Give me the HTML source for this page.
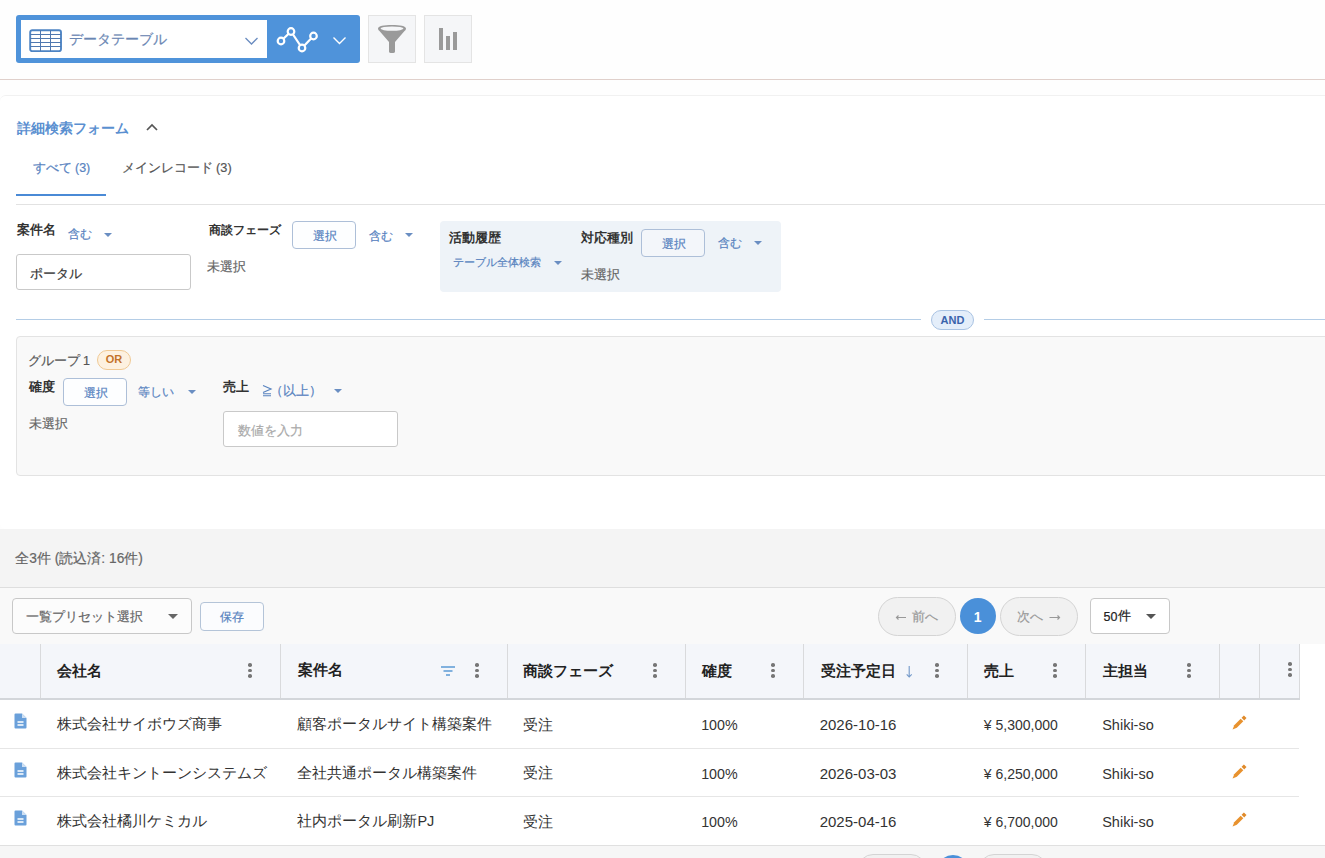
<!DOCTYPE html>
<html lang="ja">
<head>
<meta charset="utf-8">
<style>
*{box-sizing:border-box;margin:0;padding:0}
html,body{width:1325px;height:858px;overflow:hidden;background:#fefefe}
body{font-family:"Liberation Sans",sans-serif;position:relative;color:#333}
.a{position:absolute;white-space:nowrap;line-height:1}
.n{-webkit-text-stroke:0.2px currentColor}
.tri{position:absolute;width:0;height:0;border-left:4px solid transparent;border-right:4px solid transparent;border-top:4px solid #6a8ec2}
.btn{position:absolute;border:1px solid #adbfd8;border-radius:4px;background:#fdfeff}
.kb{position:absolute;width:4px;height:15px}
.kb i{position:absolute;left:0.2px;width:3.6px;height:3.6px;border-radius:50%;background:#767676}
.vd{position:absolute;top:644px;width:1px;height:54px;background:#d9dadc}
.rs{position:absolute;left:0;width:1299px;height:1px;background:#e6e6e6}
</style>
</head>
<body>
<div class="a" style="left:0;top:79px;width:1325px;height:1px;background:#e0d0cb"></div>
<div class="a" style="left:16px;top:15px;width:344px;height:48px;background:#4f93da;border-radius:3px"></div>
<div class="a" style="left:21px;top:20px;width:246px;height:38px;background:#fff"></div>
<svg class="a" style="left:29px;top:29px" width="33" height="23" viewBox="0 0 33 23">
<rect x="1.2" y="1.2" width="30.8" height="21" rx="2" fill="none" stroke="#4d84c4" stroke-width="1.9"/>
<path d="M1 5.5h31M1 9.5h31M1 13.5h31M1 17.5h31M11.5 1v21M21.5 1v21" stroke="#4f78b0" stroke-width="1" fill="none"/>
</svg>
<div class="a n" style="left:68.5px;top:32.5px;font-size:13.5px;color:#6a86b3;">データテーブル</div>
<svg class="a" style="left:244px;top:36px" width="15" height="10" viewBox="0 0 15 10"><path d="M1.5 2l6 6 6-6" stroke="#6a8cc0" stroke-width="1.3" fill="none"/></svg>
<svg class="a" style="left:276px;top:26px" width="42" height="28" viewBox="0 0 42 28">
<path d="M5 15L15 5.5L26 22L37.5 10" stroke="#fff" stroke-width="2.2" fill="none"/>
<circle cx="5" cy="15" r="3.3" fill="#4f93da" stroke="#fff" stroke-width="2.2"/>
<circle cx="15" cy="5.5" r="3.3" fill="#4f93da" stroke="#fff" stroke-width="2.2"/>
<circle cx="26" cy="22" r="3.3" fill="#4f93da" stroke="#fff" stroke-width="2.2"/>
<circle cx="37.5" cy="10" r="3.3" fill="#4f93da" stroke="#fff" stroke-width="2.2"/>
</svg>
<svg class="a" style="left:332px;top:35px" width="15" height="11" viewBox="0 0 15 11"><path d="M1.5 2.5l6 6 6-6" stroke="#fff" stroke-width="1.4" fill="none"/></svg>
<div class="a" style="left:368px;top:15px;width:48px;height:48px;background:#f5f6f8;border:1px solid #e4e4e4"></div>
<svg class="a" style="left:376px;top:23px" width="32" height="32" viewBox="0 0 32 32">
<path d="M2 5.5C2 3 8 2 16 2S30 3 30 5.5C30 6.5 29.5 7.2 28.5 8L19 19V28.5C19 29.5 18 30 16 30S13 29.5 13 28.5V19L3.5 8C2.5 7.2 2 6.5 2 5.5Z" fill="#9a9a9a"/>
<ellipse cx="16" cy="5.6" rx="11.5" ry="2.2" fill="#f5f6f8"/>
</svg>
<div class="a" style="left:424px;top:15px;width:48px;height:48px;background:#f5f6f8;border:1px solid #e4e4e4"></div>
<div class="a" style="left:439px;top:28px;width:4px;height:22px;background:#9a9a9a"></div>
<div class="a" style="left:446px;top:36px;width:4px;height:14px;background:#9a9a9a"></div>
<div class="a" style="left:453px;top:32px;width:4px;height:18px;background:#9a9a9a"></div>
<div class="a" style="left:0;top:95px;width:1340px;height:434px;background:#fff;border-top:1px solid #f1f1f1;border-radius:6px 0 0 6px"></div>
<div class="a" style="left:16.5px;top:122.0px;font-size:13.5px;font-weight:bold;color:#5a8fd0;">詳細検索フォーム</div>
<svg class="a" style="left:145px;top:122px" width="14" height="10" viewBox="0 0 14 10"><path d="M2 8l5-5 5 5" stroke="#555" stroke-width="1.7" fill="none"/></svg>
<div class="a n" style="left:32.5px;top:162.0px;font-size:12.5px;color:#5883bf;">すべて (3)</div>
<div class="a n" style="left:121.5px;top:161.5px;font-size:12.75px;color:#555;">メインレコード (3)</div>
<div class="a" style="left:16px;top:193.5px;width:90px;height:2.5px;background:#4a8ad6"></div>
<div class="a" style="left:16px;top:204px;width:1309px;height:1px;background:#e2e2e2"></div>
<div class="a" style="left:16.7px;top:224.2px;font-size:12.5px;font-weight:bold;color:#333;">案件名</div>
<div class="a n" style="left:67.5px;top:228.5px;font-size:11.5px;color:#5883bf;">含む</div>
<div class="tri" style="left:104px;top:233px"></div>
<div class="a" style="left:16px;top:254px;width:175px;height:36px;border:1px solid #c9c9c9;border-radius:3px;background:#fff"></div>
<div class="a n" style="left:29.5px;top:267.5px;font-size:12.5px;color:#333;">ポータル</div>
<div class="a" style="left:209.0px;top:223.5px;font-size:12px;font-weight:bold;color:#333;">商談フェーズ</div>
<div class="btn" style="left:292px;top:221px;width:64px;height:28px"></div>
<div class="a n" style="left:312.5px;top:230.5px;font-size:11.5px;color:#5883bf;">選択</div>
<div class="a n" style="left:369.1px;top:230.5px;font-size:11.5px;color:#5883bf;">含む</div>
<div class="tri" style="left:405px;top:233px"></div>
<div class="a n" style="left:207.3px;top:261.0px;font-size:12.5px;color:#666;">未選択</div>
<div class="a" style="left:440px;top:221px;width:341px;height:71px;background:#eef3f8;border-radius:4px"></div>
<div class="a" style="left:448.5px;top:232.0px;font-size:12.5px;font-weight:bold;color:#333;">活動履歴</div>
<div class="a n" style="left:452.5px;top:256.5px;font-size:10.75px;color:#5883bf;">テーブル全体検索</div>
<div class="tri" style="left:554px;top:261px"></div>
<div class="a" style="left:581.2px;top:232.0px;font-size:12.5px;font-weight:bold;color:#333;">対応種別</div>
<div class="btn" style="left:641px;top:229px;width:64px;height:28px;background:#f3f6fa"></div>
<div class="a n" style="left:661.5px;top:238.5px;font-size:11.5px;color:#5883bf;">選択</div>
<div class="a n" style="left:718.0px;top:238.2px;font-size:11.5px;color:#5883bf;">含む</div>
<div class="tri" style="left:754px;top:241px"></div>
<div class="a n" style="left:581.3px;top:269.0px;font-size:12.5px;color:#666;">未選択</div>
<div class="a" style="left:16px;top:319px;width:905px;height:1px;background:#b4cde6"></div>
<div class="a" style="left:984px;top:319px;width:341px;height:1px;background:#b4cde6"></div>
<div class="a" style="left:931px;top:310px;width:43px;height:20px;background:#e4eefa;border:1px solid #a9c3e3;border-radius:10px"></div>
<div class="a" style="left:940.6px;top:315.0px;font-size:11px;font-weight:bold;color:#3a64ac;">AND</div>
<div class="a" style="left:16px;top:336px;width:1330px;height:140px;background:#f9f9f9;border:1px solid #e3e3e3;border-radius:4px"></div>
<div class="a n" style="left:27.5px;top:354.5px;font-size:12.5px;color:#555;">グループ 1</div>
<div class="a" style="left:97px;top:350px;width:34px;height:20px;background:#fdf1e0;border:1px solid #f0c994;border-radius:10px"></div>
<div class="a" style="left:105.7px;top:354.3px;font-size:11px;font-weight:bold;color:#c4732a;">OR</div>
<div class="a" style="left:28.8px;top:381.0px;font-size:12.5px;font-weight:bold;color:#333;">確度</div>
<div class="btn" style="left:63px;top:378px;width:64px;height:28px"></div>
<div class="a n" style="left:83.5px;top:387.5px;font-size:11.5px;color:#5883bf;">選択</div>
<div class="a n" style="left:138.2px;top:387.0px;font-size:11.5px;color:#5883bf;">等しい</div>
<div class="tri" style="left:188px;top:390px"></div>
<div class="a n" style="left:29.1px;top:418.0px;font-size:12.5px;color:#666;">未選択</div>
<div class="a" style="left:223.0px;top:381.0px;font-size:12.5px;font-weight:bold;color:#333;">売上</div>
<svg class="a" style="left:261px;top:384px" width="12" height="13" viewBox="0 0 12 13"><path d="M2 1.5l8 3.5-8 3.5" stroke="#5883bf" stroke-width="1.2" fill="none"/><path d="M2 9.8h8M2 11.8h8" stroke="#5883bf" stroke-width="1.1"/></svg>
<div class="a n" style="left:269.5px;top:385.0px;font-size:12.5px;color:#5883bf;">（以上）</div>
<div class="tri" style="left:334px;top:389px"></div>
<div class="a" style="left:223px;top:411px;width:175px;height:36px;border:1px solid #c9c9c9;border-radius:3px;background:#fff"></div>
<div class="a n" style="left:237.8px;top:425.0px;font-size:12.75px;color:#aaa;">数値を入力</div>
<div class="a" style="left:0;top:529px;width:1325px;height:59px;background:#f4f4f4"></div>
<div class="a" style="left:0;top:587px;width:1325px;height:1px;background:#dedede"></div>
<div class="a" style="left:0;top:588px;width:1325px;height:56px;background:#f9f9f9"></div>
<div class="a n" style="left:15.3px;top:552.0px;font-size:13.75px;color:#666;">全3件 (読込済: 16件)</div>
<div class="a" style="left:12px;top:598px;width:180px;height:36px;background:#fcfcfc;border:1px solid #c8c8c8;border-radius:4px"></div>
<div class="a n" style="left:26.0px;top:611.0px;font-size:12.75px;color:#666;">一覧プリセット選択</div>
<div class="tri" style="left:168px;top:614px;border-top-color:#666;border-left-width:5px;border-right-width:5px;border-top-width:5px"></div>
<div class="btn" style="left:200px;top:602px;width:64px;height:29px;border-color:#b4c4d8;background:#fbfcfe"></div>
<div class="a n" style="left:220.3px;top:611.5px;font-size:11.5px;color:#5883bf;">保存</div>
<div class="a" style="left:878px;top:597px;width:78px;height:39px;background:#f1f1f1;border:1px solid #d4d4d4;border-radius:20px"></div>
<div class="a n" style="left:912.2px;top:609.5px;font-size:13px;color:#999;">前へ</div>
<svg class="a" style="left:895px;top:613px" width="12" height="9" viewBox="0 0 12 9"><path d="M1.5 4.5h9.5M3.5 2.5L1.5 4.5 3.5 6.5" stroke="#999" stroke-width="1.2" fill="none"/></svg>
<div class="a" style="left:960px;top:598px;width:36px;height:36px;background:#4a90d9;border-radius:50%"></div>
<div class="a" style="left:973.8px;top:610.0px;font-size:14px;font-weight:bold;color:#fff;">1</div>
<div class="a" style="left:1000px;top:597px;width:78px;height:39px;background:#f1f1f1;border:1px solid #d4d4d4;border-radius:20px"></div>
<div class="a n" style="left:1017.2px;top:609.6px;font-size:13px;color:#999;">次へ</div>
<svg class="a" style="left:1049px;top:613px" width="12" height="9" viewBox="0 0 12 9"><path d="M0.5 4.5h9.5M8.5 2.5L10.5 4.5 8.5 6.5" stroke="#999" stroke-width="1.2" fill="none"/></svg>
<div class="a" style="left:1090px;top:598px;width:80px;height:36px;background:#fff;border:1px solid #c8c8c8;border-radius:4px"></div>
<div class="a n" style="left:1103.6px;top:610.8px;font-size:12.5px;color:#222;">50</div>
<div class="a n" style="left:1118.2px;top:610.0px;font-size:12.5px;color:#222;">件</div>
<div class="tri" style="left:1146px;top:614px;border-top-color:#555;border-left-width:5px;border-right-width:5px;border-top-width:5px"></div>
<div class="a" style="left:0;top:644px;width:1325px;height:214px;background:#fff"></div>
<div class="a" style="left:0;top:644px;width:1300px;height:54px;background:#f4f6fa"></div>
<div class="a" style="left:0;top:698px;width:1300px;height:2px;background:#d3d6da"></div>
<div class="vd" style="left:40px"></div>
<div class="vd" style="left:280px"></div>
<div class="vd" style="left:507px"></div>
<div class="vd" style="left:685px"></div>
<div class="vd" style="left:803px"></div>
<div class="vd" style="left:967px"></div>
<div class="vd" style="left:1085px"></div>
<div class="vd" style="left:1219px"></div>
<div class="vd" style="left:1259px"></div>
<div class="vd" style="left:1299px"></div>
<div class="a" style="left:57.2px;top:664.0px;font-size:14.5px;font-weight:bold;color:#222;">会社名</div>
<div class="a" style="left:297.7px;top:663.3px;font-size:14.5px;font-weight:bold;color:#222;">案件名</div>
<div class="a" style="left:522.5px;top:664.0px;font-size:14.5px;font-weight:bold;color:#222;">商談フェーズ</div>
<div class="a" style="left:701.5px;top:664.0px;font-size:14.5px;font-weight:bold;color:#222;">確度</div>
<div class="a" style="left:820.8px;top:664.0px;font-size:14.5px;font-weight:bold;color:#222;">受注予定日</div>
<div class="a" style="left:983.7px;top:664.0px;font-size:14.5px;font-weight:bold;color:#222;">売上</div>
<div class="a" style="left:1103.4px;top:664.0px;font-size:14.5px;font-weight:bold;color:#222;">主担当</div>
<svg class="a" style="left:440px;top:665px" width="16" height="12" viewBox="0 0 16 12"><path d="M1 2h14M3.5 6h9M6 10h4" stroke="#5b9bd5" stroke-width="1.6" fill="none"/></svg>
<svg class="a" style="left:904px;top:664px" width="10" height="14" viewBox="0 0 10 14"><path d="M5.2 2v11M2.7 10.3L5.2 13 7.7 10.3" stroke="#7399c9" stroke-width="1.1" fill="none"/></svg>
<div class="kb" style="left:248px;top:663px"><i style="top:0"></i><i style="top:5.5px"></i><i style="top:11px"></i></div>
<div class="kb" style="left:475px;top:663px"><i style="top:0"></i><i style="top:5.5px"></i><i style="top:11px"></i></div>
<div class="kb" style="left:653px;top:663px"><i style="top:0"></i><i style="top:5.5px"></i><i style="top:11px"></i></div>
<div class="kb" style="left:771px;top:663px"><i style="top:0"></i><i style="top:5.5px"></i><i style="top:11px"></i></div>
<div class="kb" style="left:935px;top:663px"><i style="top:0"></i><i style="top:5.5px"></i><i style="top:11px"></i></div>
<div class="kb" style="left:1053px;top:663px"><i style="top:0"></i><i style="top:5.5px"></i><i style="top:11px"></i></div>
<div class="kb" style="left:1187px;top:663px"><i style="top:0"></i><i style="top:5.5px"></i><i style="top:11px"></i></div>
<div class="kb" style="left:1288px;top:662px"><i style="top:0"></i><i style="top:5.5px"></i><i style="top:11px"></i></div>
<div class="rs" style="top:748px"></div>
<div class="rs" style="top:796px"></div>
<div class="a" style="left:0;top:845px;width:1325px;height:13px;background:#f6f6f6;border-top:1px solid #e0e0e0"></div>
<svg class="a" style="left:14px;top:713.0px" width="13" height="16" viewBox="0 0 13 16"><path d="M1.5 0.5h6.5l4.5 4.5v9.5a1 1 0 0 1-1 1h-10a1 1 0 0 1-1-1v-13a1 1 0 0 1 1-1z" fill="#6aa0da"/><path d="M8 0.5v4.5h4.5" fill="#cfe0f3"/><path d="M3.5 9h6M3.5 12h6" stroke="#fff" stroke-width="1.5"/></svg>
<div class="a" style="left:57.4px;top:717.2px;font-size:14.5px;color:#333;">株式会社サイボウズ商事</div>
<div class="a" style="left:297.4px;top:717.2px;font-size:14.5px;color:#333;">顧客ポータルサイト構築案件</div>
<div class="a" style="left:523.0px;top:717.6px;font-size:14.5px;color:#333;">受注</div>
<div class="a" style="left:701.2px;top:718.0px;font-size:14.25px;color:#333;">100%</div>
<div class="a" style="left:819.7px;top:717.0px;font-size:15px;color:#333;">2026-10-16</div>
<div class="a" style="left:983.8px;top:718.0px;font-size:14px;color:#333;">¥ 5,300,000</div>
<div class="a" style="left:1102.2px;top:718.0px;font-size:14.5px;color:#333;">Shiki-so</div>
<svg class="a" style="left:1231px;top:715.0px" width="16" height="16" viewBox="0 0 16 16"><path d="M1.6 14.4L3.2 10.2 9.7 3.7 12.3 6.3 5.8 12.8Z" fill="#e8922e"/><path d="M10.6 2.8L12.9 0.5 15.5 3.1 13.2 5.4Z" fill="#e08a2a"/></svg>
<svg class="a" style="left:14px;top:761.5px" width="13" height="16" viewBox="0 0 13 16"><path d="M1.5 0.5h6.5l4.5 4.5v9.5a1 1 0 0 1-1 1h-10a1 1 0 0 1-1-1v-13a1 1 0 0 1 1-1z" fill="#6aa0da"/><path d="M8 0.5v4.5h4.5" fill="#cfe0f3"/><path d="M3.5 9h6M3.5 12h6" stroke="#fff" stroke-width="1.5"/></svg>
<div class="a" style="left:57.4px;top:765.7px;font-size:14.5px;color:#333;">株式会社キントーンシステムズ</div>
<div class="a" style="left:297.4px;top:765.7px;font-size:14.5px;color:#333;">全社共通ポータル構築案件</div>
<div class="a" style="left:523.0px;top:766.1px;font-size:14.5px;color:#333;">受注</div>
<div class="a" style="left:701.2px;top:766.5px;font-size:14.25px;color:#333;">100%</div>
<div class="a" style="left:819.7px;top:765.5px;font-size:15px;color:#333;">2026-03-03</div>
<div class="a" style="left:983.8px;top:766.5px;font-size:14px;color:#333;">¥ 6,250,000</div>
<div class="a" style="left:1102.2px;top:766.5px;font-size:14.5px;color:#333;">Shiki-so</div>
<svg class="a" style="left:1231px;top:763.5px" width="16" height="16" viewBox="0 0 16 16"><path d="M1.6 14.4L3.2 10.2 9.7 3.7 12.3 6.3 5.8 12.8Z" fill="#e8922e"/><path d="M10.6 2.8L12.9 0.5 15.5 3.1 13.2 5.4Z" fill="#e08a2a"/></svg>
<svg class="a" style="left:14px;top:810.0px" width="13" height="16" viewBox="0 0 13 16"><path d="M1.5 0.5h6.5l4.5 4.5v9.5a1 1 0 0 1-1 1h-10a1 1 0 0 1-1-1v-13a1 1 0 0 1 1-1z" fill="#6aa0da"/><path d="M8 0.5v4.5h4.5" fill="#cfe0f3"/><path d="M3.5 9h6M3.5 12h6" stroke="#fff" stroke-width="1.5"/></svg>
<div class="a" style="left:57.4px;top:814.2px;font-size:14.5px;color:#333;">株式会社橘川ケミカル</div>
<div class="a" style="left:297.4px;top:814.2px;font-size:14.5px;color:#333;">社内ポータル刷新PJ</div>
<div class="a" style="left:523.0px;top:814.6px;font-size:14.5px;color:#333;">受注</div>
<div class="a" style="left:701.2px;top:815.0px;font-size:14.25px;color:#333;">100%</div>
<div class="a" style="left:819.7px;top:814.0px;font-size:15px;color:#333;">2025-04-16</div>
<div class="a" style="left:983.8px;top:815.0px;font-size:14px;color:#333;">¥ 6,700,000</div>
<div class="a" style="left:1102.2px;top:815.0px;font-size:14.5px;color:#333;">Shiki-so</div>
<svg class="a" style="left:1231px;top:812.0px" width="16" height="16" viewBox="0 0 16 16"><path d="M1.6 14.4L3.2 10.2 9.7 3.7 12.3 6.3 5.8 12.8Z" fill="#e8922e"/><path d="M10.6 2.8L12.9 0.5 15.5 3.1 13.2 5.4Z" fill="#e08a2a"/></svg>
<div class="a" style="left:858px;top:854px;width:68px;height:30px;background:#f1f1f1;border:1px solid #d4d4d4;border-radius:15px"></div>
<div class="a" style="left:937px;top:855px;width:32px;height:32px;background:#4a90d9;border-radius:50%"></div>
<div class="a" style="left:979px;top:854px;width:68px;height:30px;background:#f1f1f1;border:1px solid #d4d4d4;border-radius:15px"></div>
</body>
</html>
